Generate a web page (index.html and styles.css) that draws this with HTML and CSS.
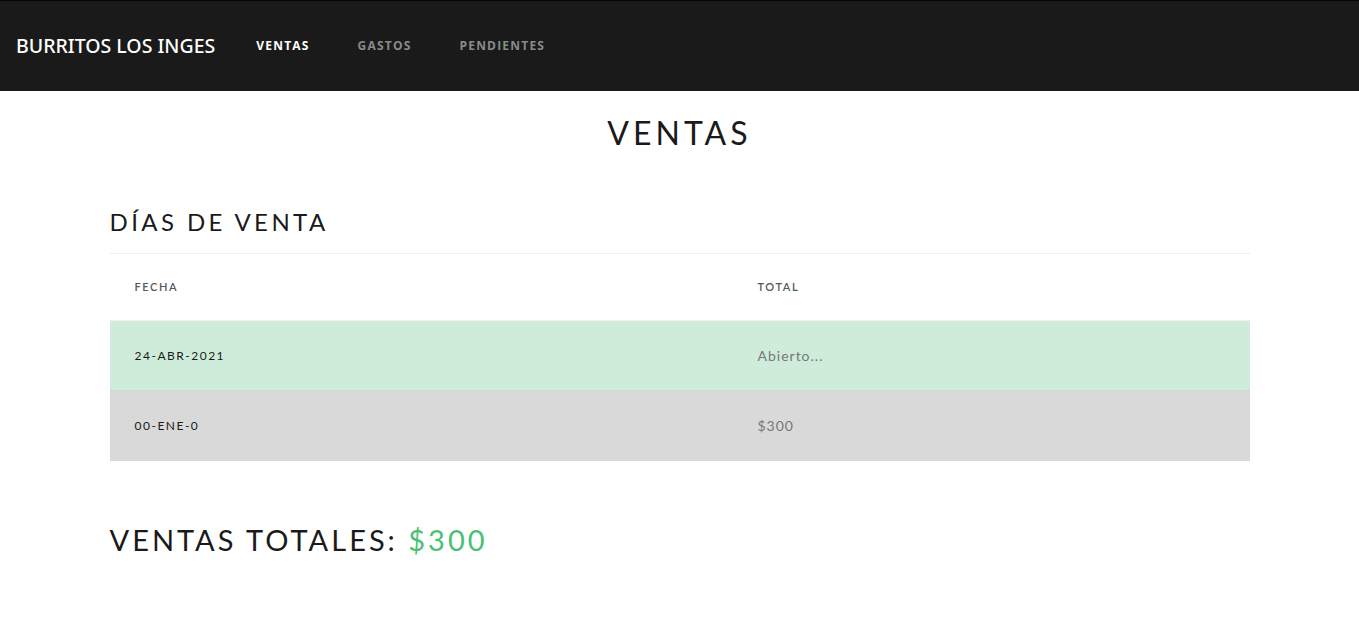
FILE: index.html
```html
<!DOCTYPE html>
<html lang="es">
<head>
<meta charset="utf-8">
<title>Burritos Los Inges - Ventas</title>
<link rel="stylesheet" href="styles.css">
</head>
<body>
<nav class="navbar">
  <a class="brand" href="#">BURRITOS LOS INGES</a>
  <ul class="nav">
    <li><a class="nav-link active" href="#">VENTAS</a></li>
    <li><a class="nav-link" href="#">GASTOS</a></li>
    <li><a class="nav-link" href="#">PENDIENTES</a></li>
  </ul>
</nav>
<main class="container">
  <h1 class="page-title">VENTAS</h1>
  <h3 class="section-title">DÍAS DE VENTA</h3>
  <table class="table">
    <thead>
      <tr><th class="col-date">FECHA</th><th>TOTAL</th></tr>
    </thead>
    <tbody>
      <tr class="row-success"><td class="date">24-ABR-2021</td><td class="amount">Abierto...</td></tr>
      <tr class="row-active"><td class="date">00-ENE-0</td><td class="amount">$300</td></tr>
    </tbody>
  </table>
  <h2 class="total">VENTAS TOTALES: <span class="total-value">$300</span></h2>
</main>
</body>
</html>
```

FILE: styles.css
```css
* { box-sizing: border-box; }
body {
  margin: 0;
  font-family: "Lato", "Open Sans", sans-serif;
  color: #55595c;
  background: #fff;
}
.navbar {
  height: 91px;
  background: #1a1a1a;
  border-top: 1px solid #050505;
  display: flex;
  align-items: center;
  padding: 0 16px 2px;
}
.brand {
  font-family: "Noto Sans", sans-serif;
  font-size: 19.5px;
  font-weight: 500;
  color: #fff;
  text-decoration: none;
  margin-right: 26px;
  letter-spacing: 0;
}
.nav {
  list-style: none;
  margin: 0;
  padding: 0;
  display: flex;
}
.nav-link {
  display: block;
  padding: 8px 15px;
  font-family: "Open Sans", sans-serif;
  font-size: 12px;
  font-weight: 700;
  letter-spacing: 1.2px;
  color: #8a8a8a;
  text-decoration: none;
  margin-right: 18px;
}
.nav-link.active { color: #fff; }
.container {
  width: 1140px;
  margin: 0 auto;
}
.page-title {
  margin: 0;
  padding-top: 23px;
  text-align: center;
  font-size: 32px;
  font-weight: 400;
  letter-spacing: 4px;
  color: #1a1a1a;
  line-height: 38px;
}
.section-title {
  margin: 55px 0 0;
  font-size: 24px;
  font-weight: 400;
  letter-spacing: 3.4px;
  color: #1a1a1a;
  line-height: 30px;
  padding-bottom: 16px;
}
.table {
  width: 100%;
  border-collapse: collapse;
  border-top: 1px solid #eeeeee;
}
.table th {
  text-align: left;
  padding: 23px 24px 25px 25px;
  font-size: 11px;
  font-weight: 600;
  letter-spacing: 1.6px;
  color: #55595c;
  height: 67px;
}
.table th.col-date { width: 623px; }
.table td {
  padding: 24px 24px 24px 25px;
  height: 70px;
  border-top: 1px solid rgba(0,0,0,0.06);
}
.table td.date {
  font-size: 12px;
  letter-spacing: 1.5px;
  color: #1a1a1a;
}
.table td.amount {
  font-size: 14px;
  letter-spacing: 1px;
  color: #777;
}
.row-success { background: #cfecdb; }
.row-active { background: #d9d9d9; }
.total {
  margin: 61px 0 0;
  font-size: 29px;
  font-weight: 400;
  letter-spacing: 3px;
  color: #1a1a1a;
  line-height: 36px;
}
.total-value { color: #4bbf73; }
```
